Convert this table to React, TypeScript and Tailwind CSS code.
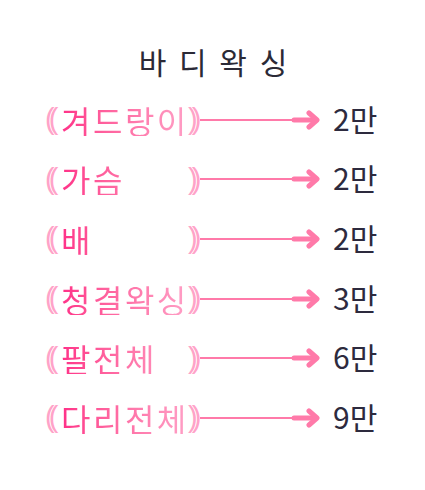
const items = [
  { name: "겨드랑이", price: "2만" },
  { name: "가슴", price: "2만" },
  { name: "배", price: "2만" },
  { name: "청결왁싱", price: "3만" },
  { name: "팔전체", price: "6만" },
  { name: "다리전체", price: "9만" },
];

function Arrow() {
  return (
    <svg width="120" height="20" viewBox="0 0 120 20" className="shrink-0">
      <line x1="0" y1="10" x2="96" y2="10" stroke="#ff7aa9" strokeWidth="2" />
      <line x1="94" y1="10" x2="115" y2="10" stroke="#ff7aa9" strokeWidth="5" strokeLinecap="round" />
      <polyline
        points="109,3 117,10 109,17"
        fill="none"
        stroke="#ff7aa9"
        strokeWidth="5"
        strokeLinecap="round"
        strokeLinejoin="round"
      />
    </svg>
  );
}

export default function App() {
  return (
    <div className="w-[425px] h-[490px] bg-white font-['Noto_Sans_CJK_KR',sans-serif]">
      <h1 className="pt-[42px] pl-[4px] h-[90px] text-center text-[30px] leading-[38px] tracking-[3px] text-[#2b2a36]">
        바 디 왁 싱
      </h1>
      <div className="flex flex-col">
        {items.map((it) => (
          <div key={it.name} className="flex items-center h-[59.6px] pl-[45px]">
            <span className="w-[16px] font-['Liberation_Sans',sans-serif] text-[29px] leading-none tracking-[-6px] text-[#ffa3c8]">
              ((
            </span>
            <span className="w-[127px] min-w-0 whitespace-nowrap text-[32px] leading-none tracking-[2.5px] bg-gradient-to-r from-[#ff2f88] to-[#ff9fc6] bg-clip-text text-transparent">
              {it.name}
            </span>
            <span className="w-[12px] font-['Liberation_Sans',sans-serif] text-[29px] leading-none tracking-[-6px] text-[#ffa3c8]">
              ))
            </span>
            <Arrow />
            <span className="ml-[13px] mb-[4px] text-[30px] leading-none text-[#2d2a3e]">{it.price}</span>
          </div>
        ))}
      </div>
    </div>
  );
}
